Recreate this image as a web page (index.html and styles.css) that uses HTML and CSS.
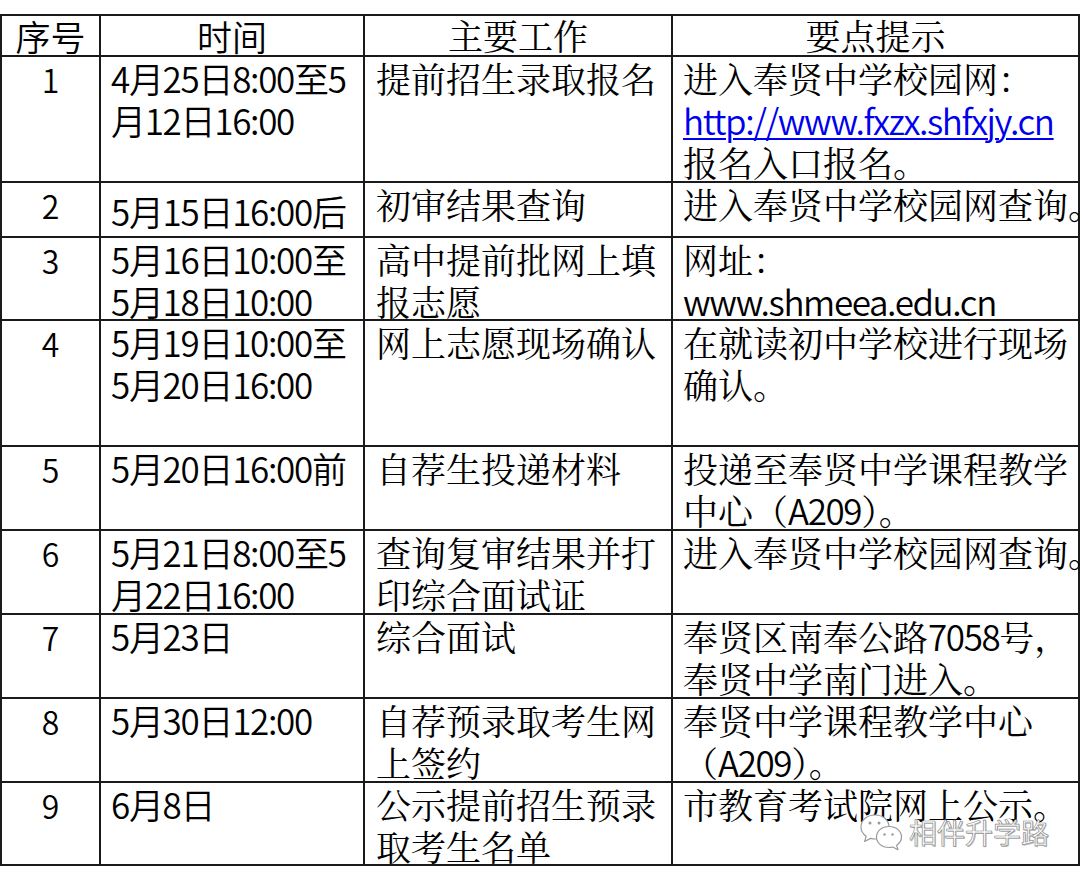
FILE: index.html
```html
<!DOCTYPE html>
<html lang="zh-CN">
<head>
<meta charset="utf-8">
<title>提前招生时间安排</title>
<link rel="stylesheet" href="styles.css">
</head>
<body>
<div class="page">
  <div class="sheet" role="table">
    <div class="cell head sans" role="columnheader">序号</div>
    <div class="cell head sans" role="columnheader">时间</div>
    <div class="cell head serif" role="columnheader">主要工作</div>
    <div class="cell head serif" role="columnheader">要点提示</div>

    <div class="cell no">1</div>
    <div class="cell time">4月25日8:00至5<br>月12日16:00</div>
    <div class="cell work">提前招生录取报名</div>
    <div class="cell tip">进入奉贤中学校园网：<br><a class="lat link" href="#">http://www.fxzx.shfxjy.cn</a><br>报名入口报名。</div>

    <div class="cell no">2</div>
    <div class="cell time lower">5月15日16:00后</div>
    <div class="cell work">初审结果查询</div>
    <div class="cell tip">进入奉贤中学校园网查询。</div>

    <div class="cell no">3</div>
    <div class="cell time">5月16日10:00至<br>5月18日10:00</div>
    <div class="cell work">高中提前批网上填<br>报志愿</div>
    <div class="cell tip">网址：<br><span class="lat">www.shmeea.edu.cn</span></div>

    <div class="cell no">4</div>
    <div class="cell time">5月19日10:00至<br>5月20日16:00</div>
    <div class="cell work">网上志愿现场确认</div>
    <div class="cell tip">在就读初中学校进行现场<br>确认。</div>

    <div class="cell no">5</div>
    <div class="cell time">5月20日16:00前</div>
    <div class="cell work">自荐生投递材料</div>
    <div class="cell tip">投递至奉贤中学课程教学<br>中心（<span class="lat">A209</span>）。</div>

    <div class="cell no">6</div>
    <div class="cell time">5月21日8:00至5<br>月22日16:00</div>
    <div class="cell work">查询复审结果并打<br>印综合面试证</div>
    <div class="cell tip">进入奉贤中学校园网查询。</div>

    <div class="cell no">7</div>
    <div class="cell time">5月23日</div>
    <div class="cell work">综合面试</div>
    <div class="cell tip">奉贤区南奉公路<span class="lat">7058</span>号，<br>奉贤中学南门进入。</div>

    <div class="cell no">8</div>
    <div class="cell time">5月30日12:00</div>
    <div class="cell work">自荐预录取考生网<br>上签约</div>
    <div class="cell tip">奉贤中学课程教学中心<br>（<span class="lat">A209</span>）。</div>

    <div class="cell no">9</div>
    <div class="cell time">6月8日</div>
    <div class="cell work">公示提前招生预录<br>取考生名单</div>
    <div class="cell tip">市教育考试院网上公示。</div>
  </div>

  <div class="watermark">
    <svg class="wm-icon" viewBox="0 0 46 40" width="46" height="40" aria-hidden="true">
      <g fill="#fff" stroke="#9a9a9a" stroke-width="1.2" stroke-linejoin="round">
        <path d="M16 3 C7.5 3 2 8.5 2 15 C2 18.8 4 22 7.2 24.2 L5.6 29.5 L11.6 26.4 C13 26.8 14.5 27 16 27 C24.5 27 30 21.5 30 15 C30 8.5 24.5 3 16 3 Z"/>
        <path d="M30 14.5 C22.5 14.5 17.5 19.4 17.5 25 C17.5 30.6 22.5 35.5 30 35.5 C31.3 35.5 32.6 35.3 33.8 35 L39 37.8 L37.6 33.2 C40.6 31.3 42.5 28.3 42.5 25 C42.5 19.4 37.5 14.5 30 14.5 Z"/>
      </g>
      <g fill="#9a9a9a">
        <circle cx="11" cy="11" r="1.5"/>
        <circle cx="20" cy="11" r="1.5"/>
        <circle cx="25.5" cy="22.5" r="1.2"/>
        <circle cx="33.5" cy="22.5" r="1.2"/>
      </g>
    </svg>
    <span class="wm-text">相伴升学路</span>
  </div>
</div>
</body>
</html>
```

FILE: styles.css
```css
html, body {
  margin: 0;
  padding: 0;
  background: #ffffff;
}

.page {
  position: relative;
  width: 1080px;
  height: 885px;
  padding-top: 14px;
  box-sizing: border-box;
  overflow: hidden;
}

.sheet {
  display: grid;
  grid-template-columns: 101px 264px 308px 407px;
  grid-template-rows: 43px 126px 55px 83px 126px 84px 84px 84px 84px 83px;
  width: 1080px;
  box-sizing: border-box;
  color: #000;
  font-family: "Noto Sans CJK SC", sans-serif;
  font-size: 35px;
  line-height: 42px;
}

.cell {
  box-sizing: border-box;
  border-right: 2px solid #1a1a1a;
  border-bottom: 2px solid #1a1a1a;
  white-space: nowrap;
  overflow: visible;
  min-width: 0;
}

.cell:nth-child(4n + 1) {
  border-left: 2px solid #1a1a1a;
}

.head {
  border-top: 2px solid #1a1a1a;
  text-align: center;
  line-height: 39px;
}

.sans {
  font-family: "Noto Sans CJK SC", sans-serif;
  font-weight: 350;
}

.serif,
.work,
.tip {
  font-family: "Noto Serif CJK SC", "Noto Sans CJK SC", serif;
}

.lat {
  font-family: "Noto Sans CJK SC", sans-serif;
  font-weight: 350;
  letter-spacing: -1.4px;
}

.link {
  color: #0000ee;
  text-decoration: underline;
  text-decoration-thickness: 2px;
  text-underline-offset: 3px;
}

.no {
  text-align: center;
  font-size: 32px;
  font-weight: 350;
  padding-top: 1px;
}

.time {
  padding-left: 10px;
  font-weight: 350;
  letter-spacing: -1.3px;
}

.time.lower {
  padding-top: 7px;
}

.work {
  padding-left: 11px;
}

.tip {
  padding-left: 10px;
}

.watermark {
  position: absolute;
  left: 859px;
  top: 812px;
  display: flex;
  align-items: center;
  gap: 4px;
}

.wm-icon {
  display: block;
}

.wm-text {
  font-family: "Noto Sans CJK SC", sans-serif;
  font-size: 28px;
  line-height: 36px;
  color: #ffffff;
  -webkit-text-stroke: 0.7px #8c8c8c;
  text-shadow: 1px 1px 0 rgba(0, 0, 0, 0.25);
}
```
